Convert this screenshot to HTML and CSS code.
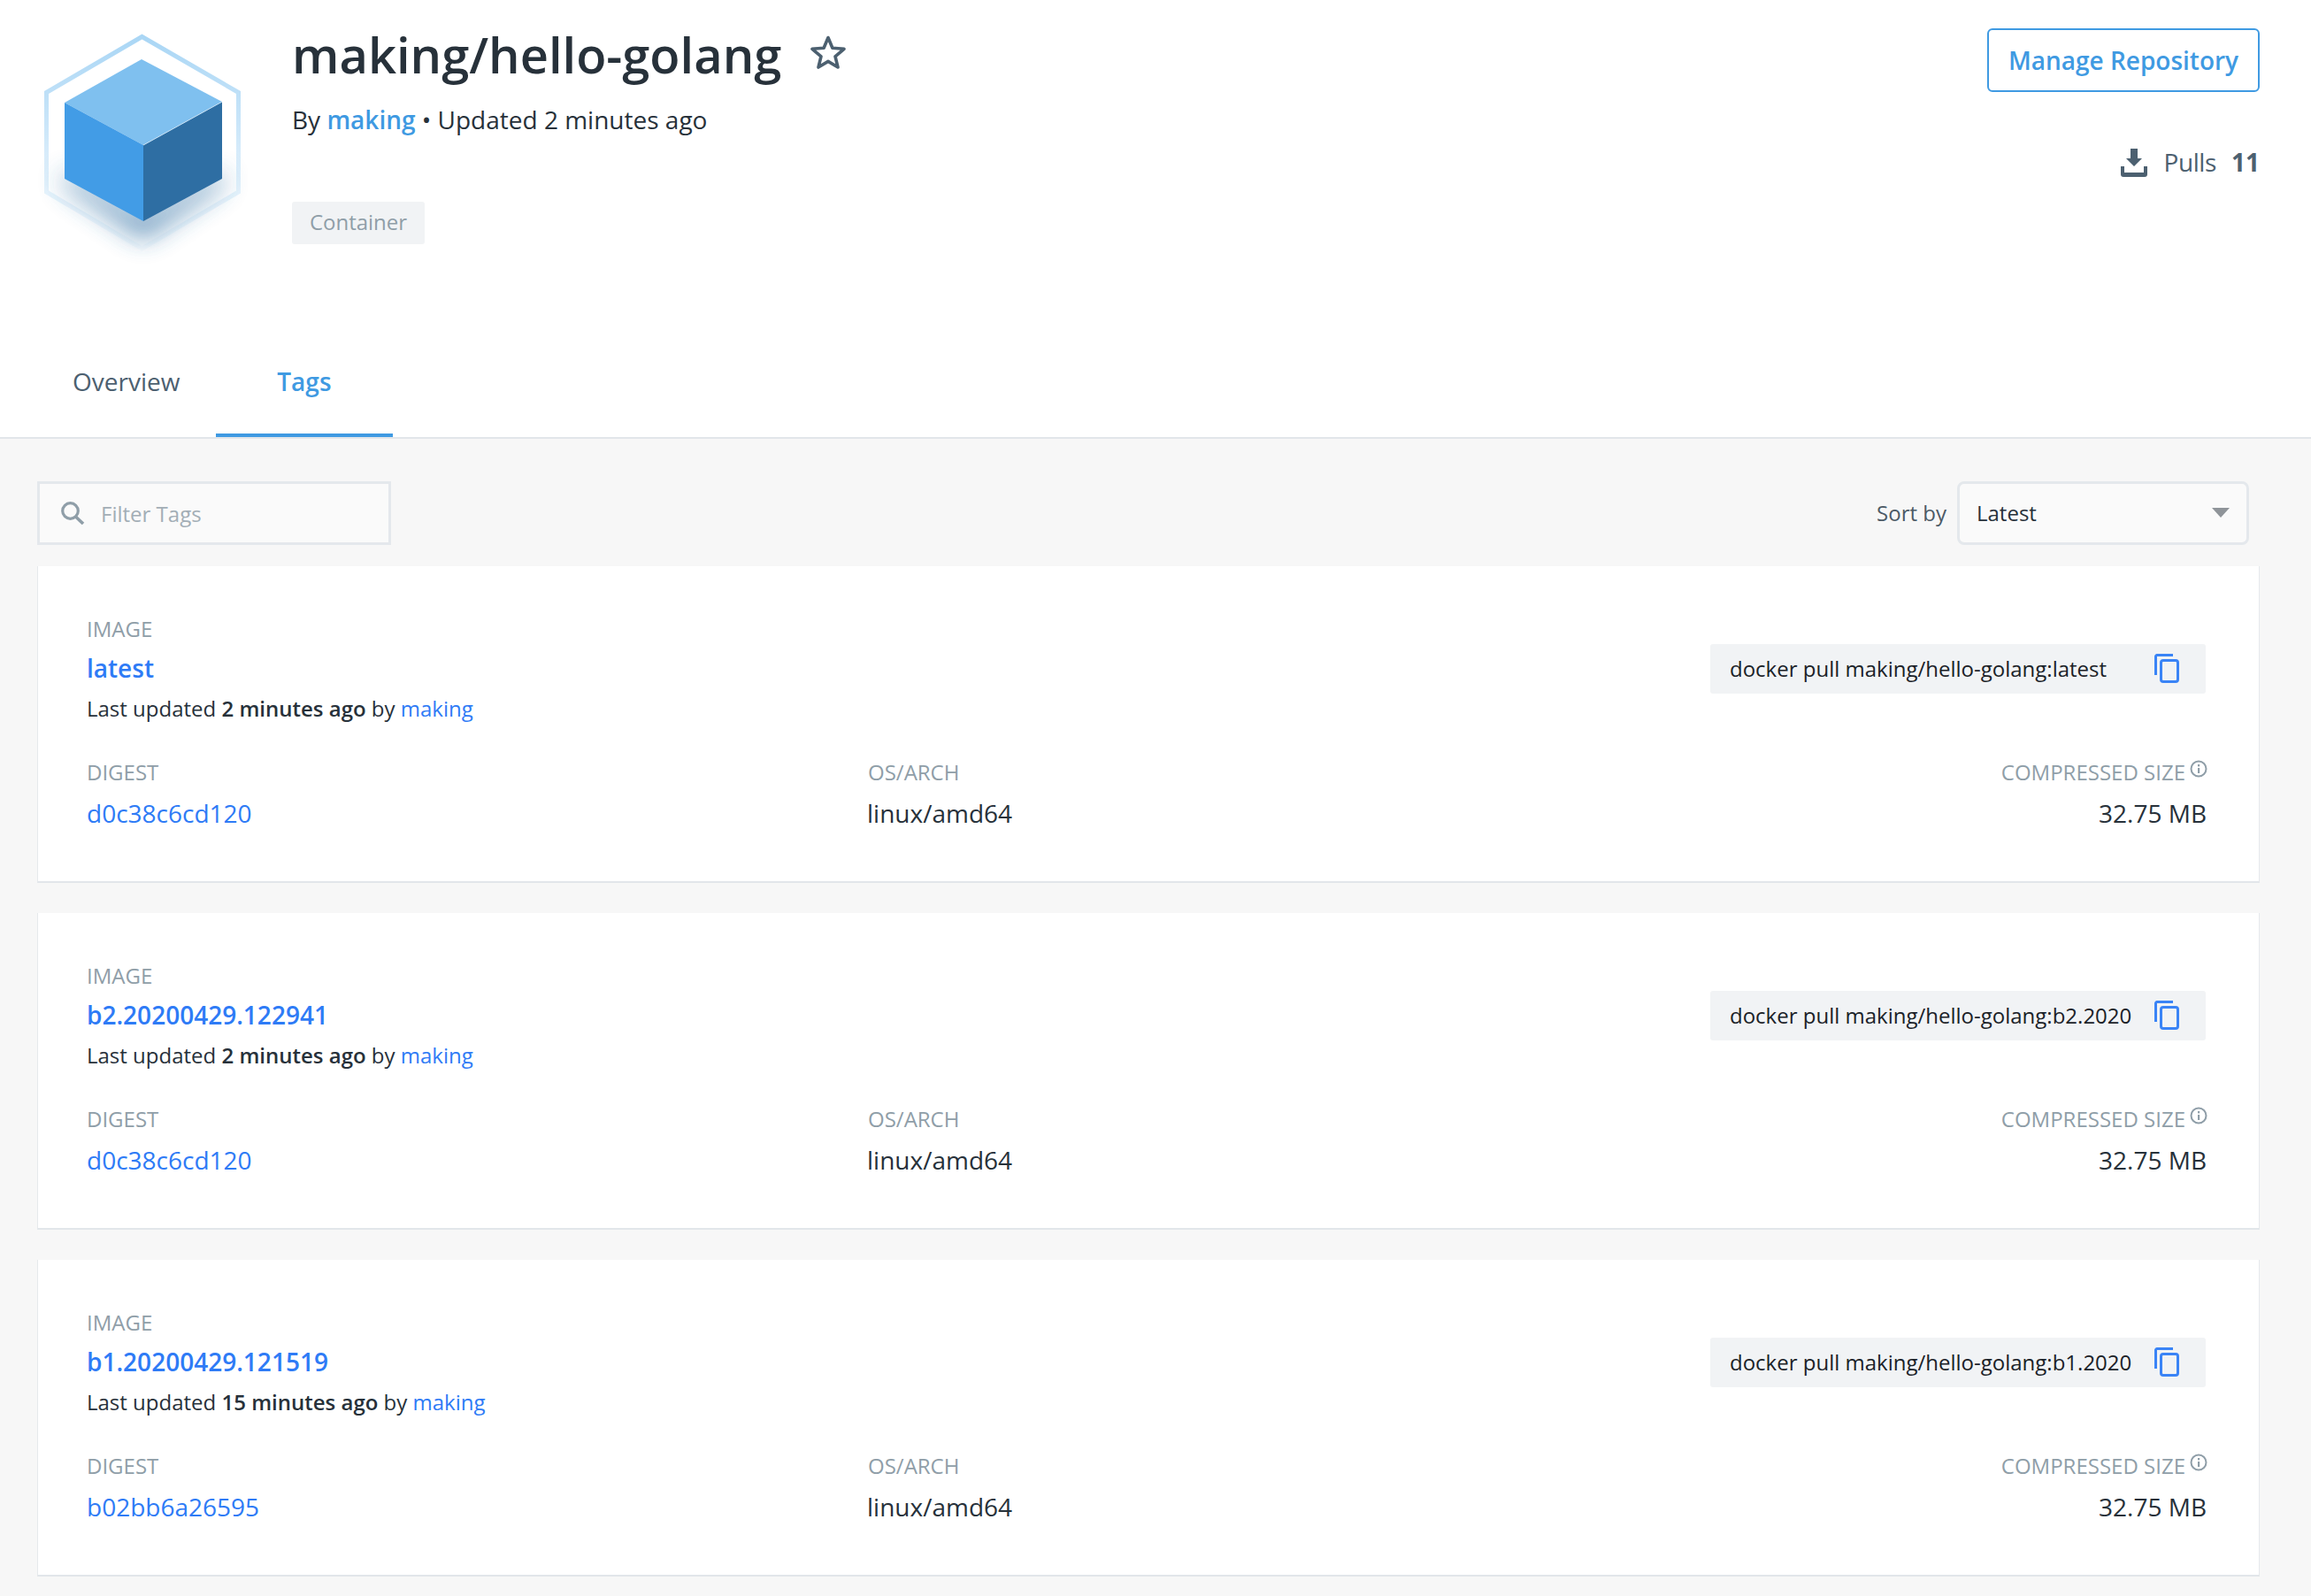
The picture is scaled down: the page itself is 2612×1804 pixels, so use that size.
FILE: index.html
```html
<!DOCTYPE html>
<html lang="en">
<head>
<meta charset="utf-8">
<title>making/hello-golang</title>
<link rel="stylesheet" href="styles.css">
</head>
<body>
<header class="repo-header">
  <div class="repo-top">
    <svg class="repo-logo" viewBox="40 30 240 270" width="240" height="270" aria-hidden="true">
      <defs>
        <linearGradient id="hexFade" gradientUnits="userSpaceOnUse" x1="0" y1="39" x2="0" y2="283">
          <stop offset="0" stop-color="#a9d6f5"/>
          <stop offset="0.4" stop-color="#c9e5f9"/>
          <stop offset="0.72" stop-color="#e6f3fc"/>
          <stop offset="1" stop-color="#f9fcfe"/>
        </linearGradient>
        <filter id="cubeShadow" x="-30%" y="-60%" width="160%" height="220%">
          <feGaussianBlur stdDeviation="15"/>
        </filter>
      </defs>
      <path d="M160.500 41.500 269.500 104.500V217L160.500 281 52.500 217V104.500Z" fill="none" stroke="url(#hexFade)" stroke-width="5"/>
      <path d="M72 195 162 245 252 195V208L162 270 72 208Z" fill="#2e6ea3" opacity="0.8" filter="url(#cubeShadow)"/>
      <path d="M160 67 251 115 162 164 73 116Z" fill="#7fc0ef"/>
      <path d="M73 116 162 164V250L73 202Z" fill="#429ce6"/>
      <path d="M251 115 162 164V250L251 202Z" fill="#2e6ea3"/>
      <path d="M251 115 162 164" fill="none" stroke="#c8e2f5" stroke-width="1"/>
    </svg>
    <div class="repo-info">
      <div class="repo-title">
        <h1>making/hello-golang</h1>
        <svg class="star" viewBox="0 0 40 38" width="40" height="38" aria-hidden="true">
          <path d="M20 2.500 24.900 14.300 38 15.300 28 23.800 31 36 20 29.400 9 36 12 23.800 2 15.300 15.100 14.300Z" fill="none" stroke="#4c6070" stroke-width="3.600" stroke-linejoin="round"/>
        </svg>
      </div>
      <p class="repo-meta">By <a class="link-soft" href="#">making</a> • Updated 2 minutes ago</p>
      <span class="repo-tag">Container</span>
    </div>
    <div class="repo-actions">
      <a class="btn-outline" href="#">Manage Repository</a>
      <div class="pulls">
        <svg viewBox="0 0 30 32" width="30" height="32" aria-hidden="true">
          <path d="M11 0h8v11h5l-9 9-9-9h5z" fill="#4c6070"/>
          <path d="M0 20h4v7h22v-7h4v9a3 3 0 0 1-3 3H3a3 3 0 0 1-3-3z" fill="#4c6070"/>
        </svg>
        <span class="pulls-label">Pulls</span>
        <strong>11</strong>
      </div>
    </div>
  </div>
  <nav class="tabs">
    <a class="tab" href="#">Overview</a>
    <a class="tab tab-active" href="#">Tags</a>
  </nav>
</header>

<main class="content">
  <div class="toolbar">
    <div class="filter">
      <svg viewBox="0 0 27 26" width="27" height="26" aria-hidden="true">
        <circle cx="10.500" cy="10.500" r="8.800" fill="none" stroke="#8f9ea8" stroke-width="3.200"/>
        <path d="M16.500 17 25 25" fill="none" stroke="#8f9ea8" stroke-width="3.600"/>
      </svg>
      <span>Filter Tags</span>
    </div>
    <div class="sort">
      <span class="sort-label">Sort by</span>
      <div class="select">
        <span>Latest</span>
        <i class="caret"></i>
      </div>
    </div>
  </div>

  <article class="card">
    <div class="card-top">
      <div class="image-info">
        <div class="label">IMAGE</div>
        <a class="tag-name" href="#">latest</a>
        <p class="updated">Last updated <b>2 minutes ago</b> by <a href="#">making</a></p>
      </div>
      <div class="pull-cmd">
        <span class="cmd">docker pull making/hello-golang:latest</span>
        <svg class="copy" viewBox="0 0 28 33" width="28" height="33" aria-hidden="true">
          <path d="M21 1.500H3a1.500 1.500 0 0 0-1.500 1.500v21" fill="none" stroke="#3a84f6" stroke-width="3"/>
          <rect x="7.500" y="7.500" width="19" height="24" rx="2.500" fill="none" stroke="#3a84f6" stroke-width="3"/>
        </svg>
      </div>
    </div>
    <div class="card-grid">
      <div class="cell"><div class="label">DIGEST</div><a class="value value-link" href="#">d0c38c6cd120</a></div>
      <div class="cell"><div class="label arch-label">OS/ARCH</div><div class="value">linux/amd64</div></div>
      <div class="cell cell-end">
        <div class="label">COMPRESSED SIZE<svg class="info" viewBox="0 0 20 20" width="20" height="20" aria-hidden="true"><circle cx="10" cy="10" r="8.500" fill="none" stroke="#8f9ea8" stroke-width="2"/><rect x="9" y="9" width="2.200" height="6" fill="#8f9ea8"/><rect x="9" y="5" width="2.200" height="2.400" fill="#8f9ea8"/></svg></div>
        <div class="value">32.75 MB</div>
      </div>
    </div>
  </article>

  <article class="card">
    <div class="card-top">
      <div class="image-info">
        <div class="label">IMAGE</div>
        <a class="tag-name" href="#">b2.20200429.122941</a>
        <p class="updated">Last updated <b>2 minutes ago</b> by <a href="#">making</a></p>
      </div>
      <div class="pull-cmd">
        <span class="cmd">docker pull making/hello-golang:b2.20200429.122941</span>
        <svg class="copy" viewBox="0 0 28 33" width="28" height="33" aria-hidden="true">
          <path d="M21 1.500H3a1.500 1.500 0 0 0-1.500 1.500v21" fill="none" stroke="#3a84f6" stroke-width="3"/>
          <rect x="7.500" y="7.500" width="19" height="24" rx="2.500" fill="none" stroke="#3a84f6" stroke-width="3"/>
        </svg>
      </div>
    </div>
    <div class="card-grid">
      <div class="cell"><div class="label">DIGEST</div><a class="value value-link" href="#">d0c38c6cd120</a></div>
      <div class="cell"><div class="label arch-label">OS/ARCH</div><div class="value">linux/amd64</div></div>
      <div class="cell cell-end">
        <div class="label">COMPRESSED SIZE<svg class="info" viewBox="0 0 20 20" width="20" height="20" aria-hidden="true"><circle cx="10" cy="10" r="8.500" fill="none" stroke="#8f9ea8" stroke-width="2"/><rect x="9" y="9" width="2.200" height="6" fill="#8f9ea8"/><rect x="9" y="5" width="2.200" height="2.400" fill="#8f9ea8"/></svg></div>
        <div class="value">32.75 MB</div>
      </div>
    </div>
  </article>

  <article class="card">
    <div class="card-top">
      <div class="image-info">
        <div class="label">IMAGE</div>
        <a class="tag-name" href="#">b1.20200429.121519</a>
        <p class="updated">Last updated <b>15 minutes ago</b> by <a href="#">making</a></p>
      </div>
      <div class="pull-cmd">
        <span class="cmd">docker pull making/hello-golang:b1.20200429.121519</span>
        <svg class="copy" viewBox="0 0 28 33" width="28" height="33" aria-hidden="true">
          <path d="M21 1.500H3a1.500 1.500 0 0 0-1.500 1.500v21" fill="none" stroke="#3a84f6" stroke-width="3"/>
          <rect x="7.500" y="7.500" width="19" height="24" rx="2.500" fill="none" stroke="#3a84f6" stroke-width="3"/>
        </svg>
      </div>
    </div>
    <div class="card-grid">
      <div class="cell"><div class="label">DIGEST</div><a class="value value-link" href="#">b02bb6a26595</a></div>
      <div class="cell"><div class="label arch-label">OS/ARCH</div><div class="value">linux/amd64</div></div>
      <div class="cell cell-end">
        <div class="label">COMPRESSED SIZE<svg class="info" viewBox="0 0 20 20" width="20" height="20" aria-hidden="true"><circle cx="10" cy="10" r="8.500" fill="none" stroke="#8f9ea8" stroke-width="2"/><rect x="9" y="9" width="2.200" height="6" fill="#8f9ea8"/><rect x="9" y="5" width="2.200" height="2.400" fill="#8f9ea8"/></svg></div>
        <div class="value">32.75 MB</div>
      </div>
    </div>
  </article>
</main>
</body>
</html>
```

FILE: styles.css
```css
* { box-sizing: border-box; }
html, body { margin: 0; padding: 0; }
body {
  height: 1804px;
  overflow: hidden;
  background: #f7f7f7;
  color: #27313a;
  font-family: "Open Sans", "Noto Sans", sans-serif;
  font-size: 24px;
}
a { text-decoration: none; }
p, h1 { margin: 0; }

.repo-header {
  background: #fff;
  border-bottom: 2px solid #e2e6ea;
}
.repo-top {
  display: flex;
  height: 394px;
  padding: 24px 58px 0 40px;
}
.repo-logo { margin: 6px 50px 0 0; flex: none; }
.repo-info { flex: 1; }
.repo-title { display: flex; align-items: center; gap: 32px; height: 76px; }
.repo-title h1 { margin-top: -3px; font-size: 56px; font-weight: 600; line-height: 76px; color: #27313a; }
.star { margin: -6px 0 0 1px; }
.repo-meta { margin-top: 15px; font-size: 28px; line-height: 40px; color: #27313a; }
.link-soft { color: #3f9ae2; font-weight: 600; }
.repo-tag {
  display: inline-block;
  margin-top: 73px;
  width: 150px;
  height: 48px;
  line-height: 46px;
  text-align: center;
  font-size: 24px;
  color: #8f9ea8;
  background: #f1f3f5;
  border-radius: 3px;
}
.repo-actions { display: flex; flex-direction: column; align-items: flex-end; padding-top: 8px; }
.btn-outline {
  display: block;
  width: 308px;
  height: 72px;
  line-height: 68px;
  text-align: center;
  font-size: 28px;
  font-weight: 600;
  color: #3f9ae2;
  border: 2px solid #3f9ae2;
  border-radius: 6px;
}
.pulls { display: flex; align-items: center; margin: 59px 0 0 0; height: 40px; font-size: 28px; color: #4c6070; }
.pulls svg { margin-top: 2px; }
.pulls-label { margin-left: 18px; font-weight: 400; letter-spacing: -0.4px; }
.pulls strong { margin-left: 17px; font-weight: 700; }

.tabs { display: flex; height: 100px; padding-left: 42px; }
.tab {
  display: block;
  height: 100px;
  padding: 17px 41px 0 40px;
  line-height: 40px;
  font-size: 28px;
  color: #4c6070;
}
.tab-active {
  width: 200px;
  padding: 17px 1px 0 0;
  text-align: center;
  font-weight: 600;
  color: #3f9ae2;
  border-bottom: 4px solid #3f9ae2;
}

.content { padding: 48px 58px 0 42px; }
.toolbar { display: flex; justify-content: space-between; height: 72px; padding-right: 12px; margin-bottom: 24px; }
.filter {
  display: flex;
  align-items: center;
  gap: 18px;
  width: 400px;
  height: 72px;
  padding-left: 24px;
  background: #fafafa;
  border: 3px solid #e4e8ec;
  color: #a3aeb6;
  font-size: 24px;
}
.sort { display: flex; align-items: center; gap: 12px; }
.sort-label { margin-top: -2px; font-size: 24px; color: #4c5a66; }
.select {
  display: flex;
  align-items: center;
  justify-content: space-between;
  width: 330px;
  height: 72px;
  padding: 0 19px 0 19px;
  background: #fafafa;
  border: 3px solid #e4e8ec;
  border-radius: 8px;
  font-size: 24px;
  color: #27313a;
}
.select span { margin-top: -2px; }
.caret {
  width: 0;
  height: 0;
  margin-top: -2px;
  border-left: 10px solid transparent;
  border-right: 10px solid transparent;
  border-top: 11px solid #8f9499;
}

.card {
  height: 358px;
  margin-bottom: 34px;
  padding: 54px 60px 0 55px;
  background: #fff;
  border-left: 1px solid #e6e9ec;
  border-right: 1px solid #e6e9ec;
  border-bottom: 2px solid #e2e6ea;
}
.card-top { display: flex; justify-content: space-between; align-items: center; height: 125px; }
.label { font-size: 24px; line-height: 34px; color: #8f9ea8; }
.tag-name { display: block; margin-top: 7px; font-size: 28px; line-height: 40px; font-weight: 600; color: #2e7bf6; }
.updated { margin-top: 8px; font-size: 24px; line-height: 36px; color: #27313a; }
.updated b { font-weight: 600; }
.updated a { color: #2e7bf6; }
.pull-cmd {
  display: flex;
  align-items: center;
  justify-content: space-between;
  width: 560px;
  height: 56px;
  margin-top: -2px;
  padding: 0 30px 0 22px;
  background: #f1f3f5;
  border-radius: 3px;
}
.cmd { width: 455px; margin-top: -1px; overflow: hidden; white-space: nowrap; font-size: 24px; color: #1b2228; }
.copy { flex: none; }
.card-grid { display: grid; grid-template-columns: 882px 1fr auto; margin-top: 37px; }
.value { display: block; margin-top: 9px; font-size: 28px; line-height: 40px; color: #27313a; }
.value-link { color: #2e7bf6; }
.arch-label { margin-left: 1px; }
.cell-end { text-align: right; }
.cell-end .label { margin-right: -2px; }
.cell-end .value { margin-right: -1px; }
.info { margin-left: 5px; vertical-align: 3px; }
```
